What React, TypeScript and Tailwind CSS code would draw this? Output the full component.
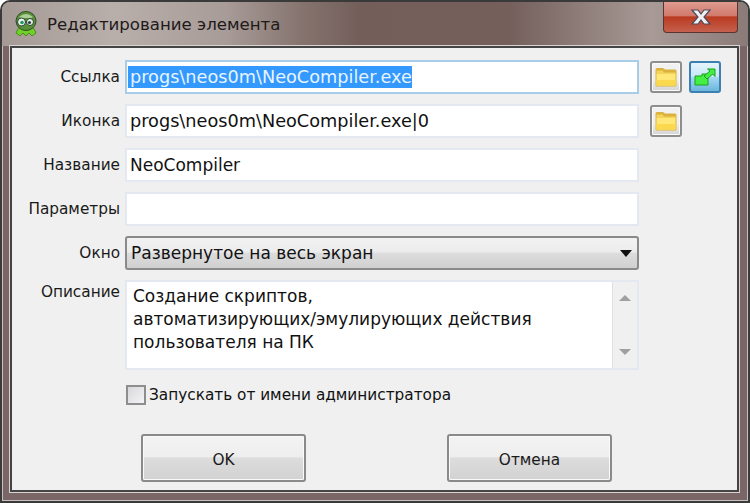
const uiFont = "font-['DejaVu_Sans',sans-serif]";

function FolderIcon() {
  return (
    <svg width="22" height="20" viewBox="0 0 22 20">
      <path d="M0.5 2.5 Q0.5 1 2 1 H8 L10 2.5 H20 Q21.5 2.5 21.5 4 V18 Q21.5 19.5 20 19.5 H2 Q0.5 19.5 0.5 18 Z" fill="#dcb23c" />
      <path d="M1.5 7 H20.5 V18.5 H1.5 Z" fill="#ffe878" />
      <path d="M1.5 3.5 H7.5 L9 5.5 H20.5 V7 H1.5 Z" fill="#f3d35c" />
      <path d="M1.5 13 H20.5 V18.5 H1.5 Z" fill="#fbd94f" />
    </svg>
  );
}

function FolderButton() {
  return (
    <div className="flex h-[32px] w-[32px] items-center justify-center rounded-[3px] border-2 border-[#8e8e8e] bg-[linear-gradient(#f2f2f2,#eeeeee_60%,#d4d4d4)] shadow-[inset_0_0_0_1px_#fafafa]">
      <FolderIcon />
    </div>
  );
}

function LinkButton() {
  return (
    <div className="flex h-[32px] w-[32px] items-center justify-center rounded-[3px] border-2 border-[#3c7fb1] bg-[linear-gradient(#e6f4fc,#c4e6f8_50%,#a7d9f5_50%,#6bb5dc)]">
      <svg width="22" height="20" viewBox="0 0 22 20">
        <path d="M1 9 H8 V7 H14 V18 H1 Z" fill="#44ee44" stroke="#17a317" strokeWidth="1" />
        <path d="M10 9 L16 4 L13.5 2 H21 V9.5 L18.8 7 L13 12 Z" fill="#44ee44" stroke="#17a317" strokeWidth="1" />
      </svg>
    </div>
  );
}

function FrogIcon() {
  return (
    <svg width="26" height="26" viewBox="0 0 26 26">
      <path d="M3 22 Q5 16 8 16 H18 Q21 16 23 22 L19 25 L16 22 L13 25 L10 22 L7 25 Z" fill="#6fd02a" stroke="#4c8a1c" />
      <ellipse cx="13" cy="10" rx="10" ry="9.5" fill="#5a8f3a" stroke="#2f4f24" />
      <path d="M6 6 Q13 0 20 6 L18 7 H8 Z" fill="#a9cf96" />
      <circle cx="8.5" cy="11" r="4" fill="#e8f2ea" stroke="#29432a" />
      <circle cx="17" cy="11" r="3.5" fill="#e8f2ea" stroke="#29432a" />
      <circle cx="9" cy="11.5" r="1.8" fill="#1f9a6a" />
      <circle cx="16.5" cy="11.5" r="1.6" fill="#33424a" />
    </svg>
  );
}

function FieldRow({ label, children }: { label: string; children: React.ReactNode }) {
  return (
    <div className="flex items-center">
      <div className="w-[108px] shrink-0 text-right text-[#1a1a1a]">{label}</div>
      {children}
    </div>
  );
}

function TextField({ value, selected, wide }: { value?: string; selected?: boolean; wide?: boolean }) {
  return (
    <div
      className={
        selected
          ? "ml-[5px] flex h-[34px] w-[514px] items-center border-2 border-[#a8cde9] bg-white pl-[1px] text-[17.7px] leading-[22px]"
          : wide
            ? "ml-[5px] flex h-[34px] w-[514px] items-center border-2 border-[#e4e8f0] bg-white pl-[3px] text-[17.7px] leading-[22px]"
            : "ml-[5px] flex h-[34px] w-[514px] items-center border-2 border-[#e4e8f0] bg-white pl-[3px] text-[17px] leading-[22px]"
      }
    >
      {selected ? <span className="bg-[#3399ff] pl-[2px] text-[#e8f4ff]">{value}</span> : <span>{value}</span>}
    </div>
  );
}

function DialogButton({ label }: { label: string }) {
  return (
    <div className="flex h-[48px] w-[165px] items-center justify-center rounded-[3px] border-2 border-[#8a8a8a] bg-[linear-gradient(#f3f3f3,#eeeeee_47%,#dddddd_50%,#d2d2d2)] pt-[3px] text-[#1a1a1a] shadow-[inset_0_0_0_1px_#fafafa]">
      {label}
    </div>
  );
}

export default function App() {
  return (
    <div className={`flex h-[503px] w-[750px] flex-col overflow-hidden rounded-t-[10px] border-2 border-[#3a3a3a] bg-[#7a6666] text-[15.3px] leading-[20px] text-[#111] shadow-[inset_0_0_0_1px_#c8c0c0] ${uiFont}`}>
      <div className="flex h-[44px] shrink-0 items-start bg-[linear-gradient(90deg,#a59a96,#b8aeaa_15%,#a89c98_30%,#86746f_40%,#735e5a_48%,#745f5b_68%,#a89a96_87%,#8a7a78)]">
        <div className="mt-[9px] ml-[11px]">
          <FrogIcon />
        </div>
        <div className="mt-[13px] ml-[8px] text-[16.6px] text-[#1e1a1a]">Редактирование элемента</div>
        <div className="ml-auto mr-[10px] flex h-[31px] w-[75px] items-center justify-center rounded-b-[4px] border border-t-0 border-[#5a3530] bg-[linear-gradient(#e09a90,#d07a6c_45%,#bb3a20_50%,#c4614e)]">
          <svg width="26" height="18" viewBox="0 0 26 18">
            <path d="M4 2 H10 L13 6 L16 2 H22 L16 9 L22 16 H16 L13 12 L10 16 H4 L10 9 Z" fill="#f0f0f4" stroke="#4a4a5a" strokeWidth="1.2" />
          </svg>
        </div>
      </div>

      <div className="mb-[9px] ml-[8px] mr-[9px] flex min-h-0 flex-1 flex-col border-2 border-[#444] bg-[#f0f0f0] pt-[12px] shadow-[0_0_0_1px_#d8d2d2]">
        <div className="flex flex-col gap-[10px]">
          <FieldRow label="Ссылка">
            <TextField value="progs\neos0m\NeoCompiler.exe" selected />
            <div className="ml-[11px] flex gap-[7px]">
              <FolderButton />
              <LinkButton />
            </div>
          </FieldRow>
          <FieldRow label="Иконка">
            <TextField value="progs\neos0m\NeoCompiler.exe|0" wide />
            <div className="ml-[11px]">
              <FolderButton />
            </div>
          </FieldRow>
          <FieldRow label="Название">
            <TextField value="NeoCompiler" />
          </FieldRow>
          <FieldRow label="Параметры">
            <TextField />
          </FieldRow>
          <FieldRow label="Окно">
            <div className="ml-[5px] flex h-[34px] w-[514px] items-center justify-between rounded-[3px] border-2 border-[#8a8a8a] bg-[linear-gradient(#f2f2f2,#ececec_47%,#dddddd_50%,#d0d0d0)] pl-[4px] pr-[5px] text-[17px]">
              <span>Развернутое на весь экран</span>
              <svg width="12" height="7" viewBox="0 0 12 7">
                <path d="M0 0 H12 L6 7 Z" fill="#111" />
              </svg>
            </div>
          </FieldRow>
          <div className="flex items-start">
            <div className="mt-[2px] w-[108px] shrink-0 text-right text-[#1a1a1a]">Описание</div>
            <div className="ml-[5px] flex h-[90px] w-[514px] border-2 border-[#e4e8f0] bg-white">
              <div className="flex-1 pl-[6px] pt-[3px] text-[17px] leading-[23px]">
                Создание скриптов,
                <br />
                автоматизирующих/эмулирующих действия
                <br />
                пользователя на ПК
              </div>
              <div className="flex w-[25px] flex-col items-center justify-between border-l border-[#e0e0e0] bg-[#f0f0f0] py-[13px]">
                <svg width="12" height="6" viewBox="0 0 12 6">
                  <path d="M6 0 L12 6 H0 Z" fill="#a0a0a0" />
                </svg>
                <svg width="12" height="6" viewBox="0 0 12 6">
                  <path d="M0 0 H12 L6 6 Z" fill="#a0a0a0" />
                </svg>
              </div>
            </div>
          </div>
        </div>

        <div className="ml-[114px] mt-[14px] flex items-center">
          <div className="h-[20px] w-[20px] border-2 border-[#8e8e8e] bg-[linear-gradient(135deg,#d8d8dc,#f4f4f6)]" />
          <span className="ml-[3px] mt-[1px]">Запускать от имени администратора</span>
        </div>

        <div className="ml-[129px] mt-[29px] flex gap-[141px]">
          <DialogButton label="OK" />
          <DialogButton label="Отмена" />
        </div>
      </div>
    </div>
  );
}
